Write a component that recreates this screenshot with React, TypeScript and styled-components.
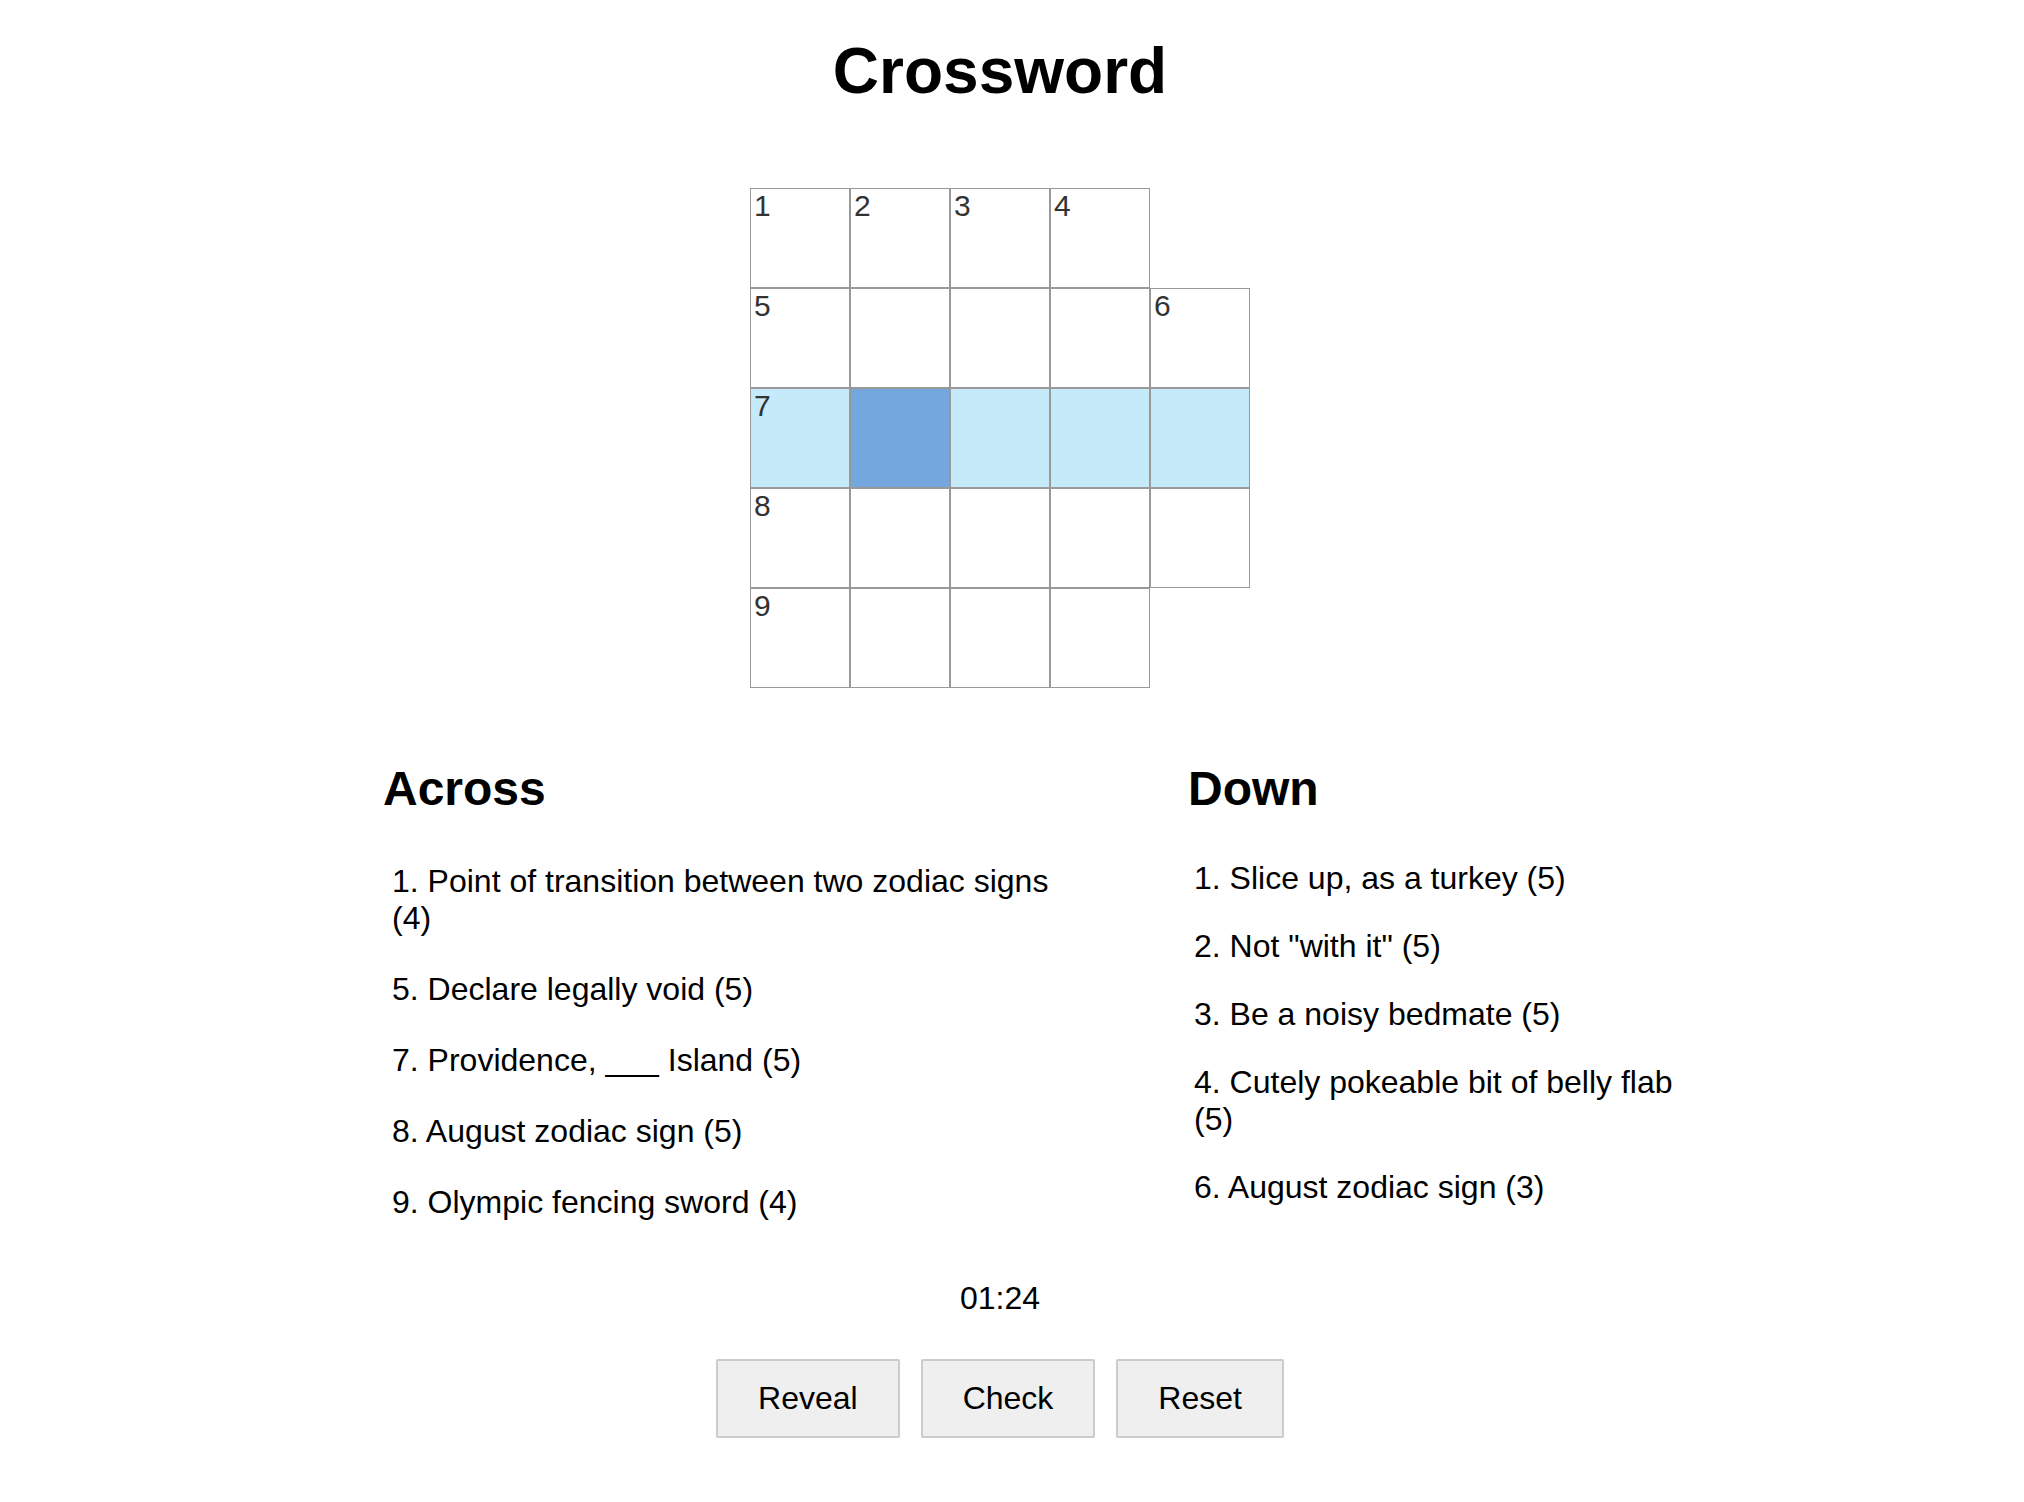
import React from "react";
import styled, { createGlobalStyle } from "styled-components";

const GlobalStyle = createGlobalStyle`
  html, body {
    margin: 0;
    padding: 0;
    background: #ffffff;
  }
  body {
    font-family: "Liberation Sans", Arial, Helvetica, sans-serif;
    color: #000000;
  }
  * { box-sizing: border-box; }
`;

const Page = styled.main`
  width: 2000px;
  display: flex;
  flex-direction: column;
  align-items: center;
  padding-top: 34px;
  padding-bottom: 60px;
`;

const Title = styled.h1`
  margin: 0;
  font-size: 64px;
  font-weight: 700;
  line-height: normal;
`;

const Board = styled.div`
  margin-top: 80px;
  display: grid;
  grid-template-columns: repeat(5, 100px);
  grid-template-rows: repeat(5, 100px);
`;

type CellState = "normal" | "row" | "active" | "void";

const Cell = styled.div<{ $state: CellState }>`
  position: relative;
  border: ${(p) => (p.$state === "void" ? "none" : "1px solid #999999")};
  background: ${(p) =>
    p.$state === "active"
      ? "#74a7de"
      : p.$state === "row"
      ? "#c5ebfb"
      : "transparent"};
`;

const CellNumber = styled.span`
  position: absolute;
  top: 2px;
  left: 3px;
  font-size: 30px;
  line-height: 1;
  color: #333333;
`;

const Clues = styled.section`
  align-self: flex-start;
  margin-left: 383px;
  margin-top: 73px;
  display: grid;
  grid-template-columns: 693px 500px;
  column-gap: 112px;
  align-items: start;
`;

const ClueColumn = styled.div`
  display: flex;
  flex-direction: column;
`;

const ClueHeading = styled.h2`
  margin: 0;
  font-size: 48px;
  font-weight: 700;
  line-height: normal;
`;

const ClueList = styled.ol<{ $gap: number; $top: number; $indent: number }>`
  list-style: none;
  margin: ${(p) => p.$top}px 0 0;
  padding: 0 0 0 ${(p) => p.$indent}px;
  display: flex;
  flex-direction: column;
  gap: ${(p) => p.$gap}px;
`;

const ClueItem = styled.li`
  font-size: 32px;
  line-height: normal;
`;

const Timer = styled.div`
  margin-top: 59px;
  font-size: 32px;
  line-height: normal;
`;

const Actions = styled.div`
  margin-top: 42px;
  display: flex;
  gap: 21px;
`;

const ActionButton = styled.button`
  font-family: "Liberation Sans", Arial, Helvetica, sans-serif;
  font-size: 32px;
  line-height: normal;
  color: #000000;
  background: #efefef;
  border: 2px solid #cccccc;
  border-radius: 2px;
  padding: 19px 40px;
  cursor: pointer;
`;

const layout: (string | null)[][] = [
  ["1", "2", "3", "4", "#"],
  ["5", null, null, null, "6"],
  ["7", null, null, null, null],
  ["8", null, null, null, null],
  ["9", null, null, null, "#"],
];

const across = [
  "1. Point of transition between two zodiac signs (4)",
  "5. Declare legally void (5)",
  "7. Providence, ___ Island (5)",
  "8. August zodiac sign (5)",
  "9. Olympic fencing sword (4)",
];

const down = [
  "1. Slice up, as a turkey (5)",
  '2. Not "with it" (5)',
  "3. Be a noisy bedmate (5)",
  "4. Cutely pokeable bit of belly flab (5)",
  "6. August zodiac sign (3)",
];

const activeRow = 2;
const activeCol = 1;

export default function App() {
  return (
    <>
      <GlobalStyle />
      <Page>
        <Title>Crossword</Title>
        <Board>
          {layout.map((row, r) =>
            row.map((v, c) => {
              let state: CellState = "normal";
              if (v === "#") state = "void";
              else if (r === activeRow && c === activeCol) state = "active";
              else if (r === activeRow) state = "row";
              return (
                <Cell key={`${r}-${c}`} $state={state}>
                  {v && v !== "#" ? <CellNumber>{v}</CellNumber> : null}
                </Cell>
              );
            })
          )}
        </Board>
        <Clues>
          <ClueColumn>
            <ClueHeading>Across</ClueHeading>
            <ClueList $gap={34} $top={47} $indent={9}>
              {across.map((c) => (
                <ClueItem key={c}>{c}</ClueItem>
              ))}
            </ClueList>
          </ClueColumn>
          <ClueColumn>
            <ClueHeading>Down</ClueHeading>
            <ClueList $gap={31} $top={44} $indent={6}>
              {down.map((c) => (
                <ClueItem key={c}>{c}</ClueItem>
              ))}
            </ClueList>
          </ClueColumn>
        </Clues>
        <Timer>01:24</Timer>
        <Actions>
          <ActionButton>Reveal</ActionButton>
          <ActionButton>Check</ActionButton>
          <ActionButton>Reset</ActionButton>
        </Actions>
      </Page>
    </>
  );
}
